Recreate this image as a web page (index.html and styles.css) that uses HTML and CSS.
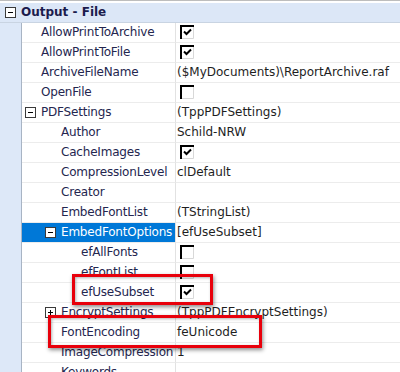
FILE: index.html
```html
<!DOCTYPE html>
<html>
<head>
<meta charset="utf-8">
<link rel="stylesheet" href="styles.css">
</head>
<body>
<div class="inspector">
  <div class="cat"><span class="exp"></span><span class="cat-title">Output - File</span></div>

  <div class="row"><div class="gut"></div><div class="name l1">AllowPrintToArchive</div><div class="val"><svg class="cb" viewBox="0 0 14 14"><path class="cb-hi" d="M13.5 1V13.5H1"/><path class="cb-sh" d="M1 14V1H14"/><path class="cb-ck" d="M4 6.5L6.5 9L11 4.5"/></svg></div></div>
  <div class="row"><div class="gut"></div><div class="name l1">AllowPrintToFile</div><div class="val"><svg class="cb" viewBox="0 0 14 14"><path class="cb-hi" d="M13.5 1V13.5H1"/><path class="cb-sh" d="M1 14V1H14"/><path class="cb-ck" d="M4 6.5L6.5 9L11 4.5"/></svg></div></div>
  <div class="row"><div class="gut"></div><div class="name l1">ArchiveFileName</div><div class="val">($MyDocuments)\ReportArchive.raf</div></div>
  <div class="row"><div class="gut"></div><div class="name l1">OpenFile</div><div class="val"><svg class="cb" viewBox="0 0 14 14"><path class="cb-hi" d="M13.5 1V13.5H1"/><path class="cb-sh" d="M1 14V1H14"/></svg></div></div>
  <div class="row"><div class="gut"></div><div class="name l1"><span class="exp"></span>PDFSettings</div><div class="val">(TppPDFSettings)</div></div>
  <div class="row"><div class="gut"></div><div class="name l2">Author</div><div class="val">Schild-NRW</div></div>
  <div class="row"><div class="gut"></div><div class="name l2">CacheImages</div><div class="val"><svg class="cb" viewBox="0 0 14 14"><path class="cb-hi" d="M13.5 1V13.5H1"/><path class="cb-sh" d="M1 14V1H14"/><path class="cb-ck" d="M4 6.5L6.5 9L11 4.5"/></svg></div></div>
  <div class="row"><div class="gut"></div><div class="name l2">CompressionLevel</div><div class="val">clDefault</div></div>
  <div class="row"><div class="gut"></div><div class="name l2">Creator</div><div class="val"></div></div>
  <div class="row"><div class="gut"></div><div class="name l2">EmbedFontList</div><div class="val">(TStringList)</div></div>
  <div class="row"><div class="gut"></div><div class="name l2 sel"><span class="exp"></span>EmbedFontOptions</div><div class="val">[efUseSubset]</div></div>
  <div class="row"><div class="gut"></div><div class="name l3">efAllFonts</div><div class="val"><svg class="cb" viewBox="0 0 14 14"><path class="cb-hi" d="M13.5 1V13.5H1"/><path class="cb-sh" d="M1 14V1H14"/></svg></div></div>
  <div class="row"><div class="gut"></div><div class="name l3">efFontList</div><div class="val"><svg class="cb" viewBox="0 0 14 14"><path class="cb-hi" d="M13.5 1V13.5H1"/><path class="cb-sh" d="M1 14V1H14"/></svg></div></div>
  <div class="row"><div class="gut"></div><div class="name l3">efUseSubset</div><div class="val"><svg class="cb" viewBox="0 0 14 14"><path class="cb-hi" d="M13.5 1V13.5H1"/><path class="cb-sh" d="M1 14V1H14"/><path class="cb-ck" d="M4 6.5L6.5 9L11 4.5"/></svg></div></div>
  <div class="row"><div class="gut"></div><div class="name l2"><span class="exp plus"></span>EncryptSettings</div><div class="val">(TppPDFEncryptSettings)</div></div>
  <div class="row"><div class="gut"></div><div class="name l2">FontEncoding</div><div class="val">feUnicode</div></div>
  <div class="row"><div class="gut"></div><div class="name l2">ImageCompression</div><div class="val">1</div></div>
  <div class="row"><div class="gut"></div><div class="name l2">Keywords</div><div class="val"></div></div>
</div>
<div class="mark mark-subset"></div>
<div class="mark mark-encoding"></div>
</body>
</html>
```
FILE: styles.css
```css
html, body {
  margin: 0;
  padding: 0;
  background: #ffffff;
  overflow: hidden;
}
body {
  width: 400px;
  height: 372px;
  position: relative;
  font-family: "DejaVu Sans", Verdana, sans-serif;
  font-size: 12px;
}
.inspector {
  border-top: 1px solid #bdbdbd;
  padding-top: 2px;
  background: #ffffff;
}
.cat {
  height: 19px;
  background: #dce7f7;
  border-bottom: 1px solid #c9d4e2;
  display: flex;
  align-items: center;
  padding-left: 21px;
}
.cat-title {
  font-weight: bold;
  color: #1b1b4d;
  line-height: 19px;
}
.row {
  display: flex;
  height: 20px;
}
.gut {
  width: 21px;
  flex: none;
  background: #dde8f8;
  border-right: 1px solid #a8b4c4;
}
.name {
  width: 153px;
  flex: none;
  height: 19px;
  line-height: 19px;
  border-bottom: 1px solid #ececec;
  border-right: 1px solid #e2e2e2;
  color: #24264f;
  display: flex;
  align-items: center;
  white-space: nowrap;
  overflow: hidden;
  letter-spacing: -0.2px;
}
.l1 { padding-left: 19px; width: 134px; }
.l2 { padding-left: 39px; width: 114px; }
.l3 { padding-left: 59px; width: 94px; }
.sel {
  background: #0078d7;
  color: #ffffff;
}
.val {
  flex: 1;
  height: 19px;
  line-height: 19px;
  border-bottom: 1px solid #ececec;
  padding-left: 1px;
  color: #1e1e1e;
  white-space: nowrap;
  overflow: hidden;
}
.exp {
  flex: none;
  width: 9px;
  height: 9px;
  border: 1px solid #3a3a3a;
  background: #ffffff;
  margin-left: -16px;
  margin-right: 5px;
  position: relative;
}
.exp::before {
  content: "";
  position: absolute;
  left: 2px;
  top: 4px;
  width: 5px;
  height: 1px;
  background: #000000;
}
.exp.plus::after {
  content: "";
  position: absolute;
  left: 4px;
  top: 2px;
  width: 1px;
  height: 5px;
  background: #000000;
}
.cb {
  display: block;
  width: 14px;
  height: 14px;
  margin-left: 3px;
  margin-top: 2px;
}
.cb-hi {
  fill: none;
  stroke: #d8d8d8;
  stroke-width: 1;
}
.cb-sh {
  fill: none;
  stroke: #000000;
  stroke-width: 2;
}
.cb-ck {
  fill: none;
  stroke: #000000;
  stroke-width: 2;
}
.mark {
  position: absolute;
  border: 3px solid #e8000b;
  box-shadow: 1px 2px 4px rgba(0, 0, 0, 0.45), inset 1px 1px 3px rgba(0, 0, 0, 0.3);
}
.mark-subset {
  left: 72px;
  top: 274px;
  width: 135px;
  height: 25px;
}
.mark-encoding {
  left: 48px;
  top: 315px;
  width: 208px;
  height: 27px;
}
```
